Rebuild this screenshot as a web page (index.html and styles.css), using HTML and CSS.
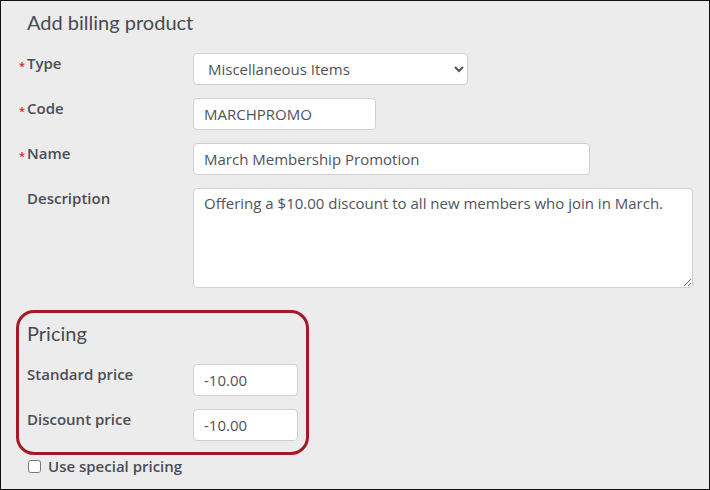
FILE: index.html
```html
<!DOCTYPE html>
<html>
<head>
<meta charset="utf-8">
<link rel="stylesheet" href="styles.css">
</head>
<body>
<div class="frame">
  <h1 class="title">Add billing product</h1>
  <div class="form-grid">
    <label class="label req">Type</label>
    <div class="control">
      <select class="select">
        <option>Miscellaneous Items</option>
      </select>
    </div>
    <label class="label req">Code</label>
    <div class="control"><input class="input w-code" type="text" value="MARCHPROMO"></div>
    <label class="label req">Name</label>
    <div class="control"><input class="input w-name" type="text" value="March Membership Promotion"></div>
    <label class="label">Description</label>
    <div class="control"><textarea class="textarea">Offering a $10.00 discount to all new members who join in March.</textarea></div>
  </div>
  <div class="pricing">
    <h2 class="subtitle">Pricing</h2>
    <div class="form-grid price-grid">
      <label class="label">Standard price</label>
      <div class="control"><input class="input w-price" type="text" value="-10.00"></div>
      <label class="label">Discount price</label>
      <div class="control"><input class="input w-price" type="text" value="-10.00"></div>
    </div>
  </div>
  <label class="check-row"><input type="checkbox" class="check"><span>Use special pricing</span></label>
</div>
</body>
</html>
```
FILE: styles.css
```css
html, body {
  margin: 0;
  padding: 0;
}
body {
  font-family: "Open Sans", "Liberation Sans", sans-serif;
  background: #ececec;
}
.frame {
  width: 710px;
  height: 490px;
  box-sizing: border-box;
  border: 1px solid #111;
  background: #ececec;
  padding: 9px 0 0 26px;
}
.title {
  margin: 0;
  font-family: "Lato", "Open Sans", sans-serif;
  font-weight: 400;
  font-size: 20px;
  line-height: 24px;
  color: #474b53;
}
.form-grid {
  display: grid;
  grid-template-columns: 166px auto;
  row-gap: 13px;
  margin-top: 19px;
}
.label {
  font-size: 15px;
  font-weight: 600;
  line-height: 20px;
  color: #4a4d55;
}
.req::before {
  content: "*";
  color: #e0191f;
  display: inline-block;
  width: 8px;
  margin-left: -8px;
  font-size: 11px;
  vertical-align: -1px;
}
.control {
  display: flex;
}
.select, .input, .textarea {
  box-sizing: border-box;
  border: 1px solid #cfcfcf;
  border-radius: 4px;
  background: #fff;
  font-family: "Open Sans", "Liberation Sans", sans-serif;
  font-size: 15px;
  color: #4f535b;
}
.select {
  width: 275px;
  height: 32px;
  padding: 0 6px 0 10px;
}
.input {
  height: 32px;
  padding: 0 10px;
}
.w-code { width: 183px; }
.w-name { width: 397px; }
.w-price { width: 105px; }
.textarea {
  width: 500px;
  height: 100px;
  padding: 4px 10px;
  line-height: 20px;
  resize: vertical;
}
.pricing {
  width: 293px;
  box-sizing: border-box;
  margin: 22px 0 0 -11px;
  border: 3px solid #a31a24;
  border-radius: 18px;
  padding: 8px 9px 11px 8px;
}
.subtitle {
  margin: 0;
  font-family: "Lato", "Open Sans", sans-serif;
  font-weight: 400;
  font-size: 20px;
  line-height: 24px;
  color: #474b53;
}
.price-grid {
  margin-top: 19px;
}
.check-row {
  display: flex;
  align-items: center;
  gap: 7px;
  margin-top: 1px;
  margin-left: 1px;
  font-size: 15px;
  font-weight: 600;
  line-height: 20px;
  color: #4a4d55;
}
.check {
  margin: 0;
  width: 13px;
  height: 13px;
}
```
